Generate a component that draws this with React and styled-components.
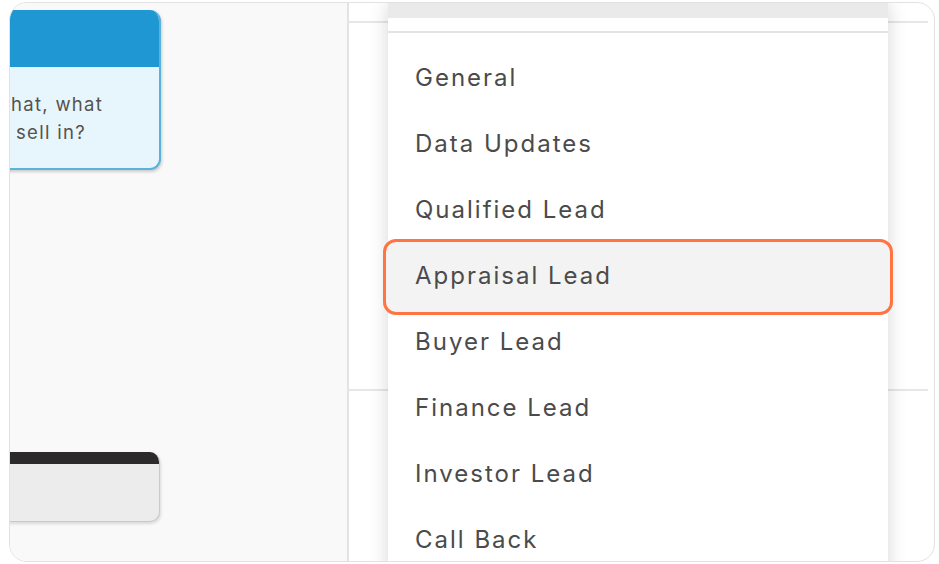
import React from "react";
import { createGlobalStyle, styled } from "styled-components";

const categories = [
  "General",
  "Data Updates",
  "Qualified Lead",
  "Appraisal Lead",
  "Buyer Lead",
  "Finance Lead",
  "Investor Lead",
  "Call Back",
];

const App = () => {
  return (
    <>
      <GlobalStyle />
      <Frame>
        <Board>
          <QuestionCard>
            <CardHeader />
            <CardBody>
              <CardLine>hat, what</CardLine>
              <CardLine $indent>sell in?</CardLine>
            </CardBody>
          </QuestionCard>
          <StepCard>
            <StepBar />
          </StepCard>
        </Board>
        <SidePanel>
          <TopSection />
          <MiddleSection />
          <Dropdown>
            <DropdownCap />
            <SearchRow />
            <OptionList>
              {categories.map((name) => (
                <Option key={name} $active={name === "Appraisal Lead"}>
                  {name}
                </Option>
              ))}
            </OptionList>
          </Dropdown>
        </SidePanel>
      </Frame>
    </>
  );
};

const GlobalStyle = createGlobalStyle`
  body {
    margin: 0;
    background: #ffffff;
    font-family: "Inter", "Liberation Sans", sans-serif;
  }
`;

const Frame = styled.div`
  margin: 2px 0 0 9px;
  width: 924px;
  height: 558px;
  border: 1px solid #e2e2e2;
  border-radius: 18px;
  overflow: hidden;
  display: flex;
  background: #ffffff;
`;

const Board = styled.div`
  width: 337px;
  flex-shrink: 0;
  background: #f9f9f9;
  border-right: 2px solid #e3e3e3;
  overflow: hidden;
  display: flex;
  flex-direction: column;
  padding-top: 7px;
`;

const QuestionCard = styled.div`
  margin-left: -20px;
  width: 167px;
  height: 158px;
  border: 2px solid #5cb1dd;
  border-top: none;
  border-radius: 11px;
  background: #e7f5fc;
  overflow: hidden;
  display: flex;
  flex-direction: column;
  box-shadow: 1px 2px 3px rgba(0, 0, 0, 0.18);
`;

const CardHeader = styled.div`
  height: 57px;
  background: #1e97d2;
`;

const CardBody = styled.div`
  padding: 23px 0 0 19px;
  display: flex;
  flex-direction: column;
`;

const CardLine = styled.div`
  font-family: "Inter", "Liberation Sans", sans-serif;
  font-size: 18.5px;
  line-height: 28px;
  letter-spacing: 1.3px;
  color: #55524f;
  padding-left: ${(p) => (p.$indent ? "5px" : "0")};
  white-space: nowrap;
`;

const StepCard = styled.div`
  margin: 282px 0 0 -20px;
  width: 168px;
  height: 69px;
  border: 1px solid #c9c9c9;
  border-top: none;
  border-radius: 10px;
  background: #ececec;
  overflow: hidden;
  box-shadow: 1px 2px 3px rgba(0, 0, 0, 0.12);
`;

const StepBar = styled.div`
  height: 12px;
  background: #2c2a2b;
`;

const SidePanel = styled.div`
  flex: 1;
  position: relative;
  display: flex;
  flex-direction: column;
  padding-right: 6px;
`;

const TopSection = styled.div`
  height: 18px;
  border-bottom: 2px solid #e6e6e6;
`;

const MiddleSection = styled.div`
  height: 366px;
  border-bottom: 2px solid #e6e6e6;
`;

const Dropdown = styled.div`
  position: absolute;
  left: 39px;
  top: 0;
  width: 500px;
  height: 600px;
  background: #ffffff;
  box-shadow: 0 0 18px rgba(0, 0, 0, 0.16);
  display: flex;
  flex-direction: column;
`;

const DropdownCap = styled.div`
  height: 15px;
  background: #eaeaea;
`;

const SearchRow = styled.div`
  height: 13px;
  border-bottom: 2px solid #e3e3e3;
`;

const OptionList = styled.div`
  display: flex;
  flex-direction: column;
  padding-top: 11px;
`;

const Option = styled.div`
  height: 66px;
  display: flex;
  align-items: center;
  padding-left: 27px;
  font-family: "Inter", "Liberation Sans", sans-serif;
  font-size: 24px;
  letter-spacing: 2px;
  color: #4b4b4b;
  box-sizing: border-box;

  ${(p) =>
    p.$active &&
    `
    height: 76px;
    margin: -3px -5px -7px;
    padding-left: 29px;
    padding-bottom: 3px;
    border: 3px solid #ff7442;
    border-radius: 13px;
    background: #f3f3f3;
  `}
`;

export default App;
